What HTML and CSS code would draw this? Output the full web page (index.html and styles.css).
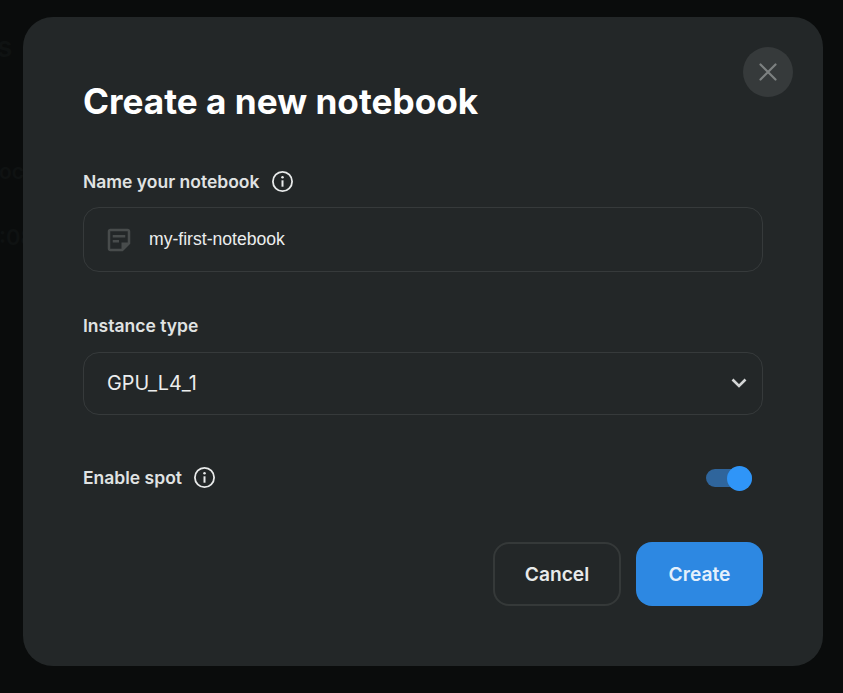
FILE: index.html
```html
<!DOCTYPE html>
<html lang="en">
<head>
<meta charset="utf-8">
<title>Create a new notebook</title>
<link rel="stylesheet" href="styles.css">
</head>
<body>
<div class="backdrop-text">
  <span class="bg-s">s</span>
  <span class="bg-a">oc-</span>
  <span class="bg-b">:08</span>
</div>
<main class="modal">
  <button class="close" type="button" aria-label="Close">
    <svg width="18" height="18" viewBox="0 0 18 18" fill="none" stroke="#7d8181" stroke-width="2.2" stroke-linecap="round"><path d="M1.5 1.5 16.5 16.5M16.5 1.5 1.5 16.5"/></svg>
  </button>
  <h1 class="title">Create a new notebook</h1>
  <div class="field name-field">
    <div class="label-row">
      <span class="label">Name your notebook</span>
      <svg class="info" width="23" height="23" viewBox="0 0 23 23" fill="none"><circle cx="11.5" cy="11.5" r="9.6" stroke="#e8eaea" stroke-width="1.8"/><circle cx="11.5" cy="7.3" r="1.25" fill="#e8eaea"/><path d="M11.5 10.3v6.4" stroke="#e8eaea" stroke-width="2"/></svg>
    </div>
    <div class="box input-box">
      <svg width="30" height="30" viewBox="0 0 24 24" fill="#484c4c"><path d="M19 5v9h-5v5H5V5h14m0-2H4.99C3.89 3 3 3.9 3 5v14c0 1.1.89 2 1.99 2H15l6-6V5c0-1.1-.9-2-2-2zm-7 11H7v-2h5v2zm5-4H7V8h10v2z"/></svg>
      <span class="input-text">my-first-notebook</span>
    </div>
  </div>
  <div class="field type-field">
    <div class="label-row"><span class="label">Instance type</span></div>
    <div class="box select-box">
      <span class="select-text">GPU_L4_1</span>
      <svg width="16" height="10" viewBox="0 0 16 10" fill="none"><path d="M1.5 1.5 8 8l6.5-6.5" stroke="#d4d6d6" stroke-width="2.6"/></svg>
    </div>
  </div>
  <div class="spot-row">
    <div class="label-row">
      <span class="label">Enable spot</span>
      <svg class="info" width="23" height="23" viewBox="0 0 23 23" fill="none"><circle cx="11.5" cy="11.5" r="9.6" stroke="#e8eaea" stroke-width="1.8"/><circle cx="11.5" cy="7.3" r="1.25" fill="#e8eaea"/><path d="M11.5 10.3v6.4" stroke="#e8eaea" stroke-width="2"/></svg>
    </div>
    <div class="toggle"><span class="knob"></span></div>
  </div>
  <div class="actions">
    <button class="btn cancel" type="button">Cancel</button>
    <button class="btn create" type="button">Create</button>
  </div>
</main>
</body>
</html>
```
FILE: styles.css
```css
* { box-sizing: border-box; }
html, body { margin: 0; height: 100%; }
body {
  background: #0a0c0c;
  font-family: Inter, "Liberation Sans", sans-serif;
  overflow: hidden;
  padding: 17px 0 0 23px;
}
.backdrop-text span {
  position: absolute;
  color: #0f1212;
  font-weight: 600;
  line-height: 1;
}
.bg-s { left: -3px; top: 33px; font-size: 28px; }
.bg-a { left: -1px; top: 161px; font-size: 21px; }
.bg-b { left: -1px; top: 226px; font-size: 22px; }
.modal {
  position: relative;
  width: 800px;
  height: 649px;
  background: #232728;
  border-radius: 30px;
  padding: 59px 60px 60px;
  display: flex;
  flex-direction: column;
}
.close {
  position: absolute;
  top: 30px;
  right: 30px;
  width: 50px;
  height: 50px;
  border: 0;
  border-radius: 50%;
  background: #363a3b;
  display: flex;
  align-items: center;
  justify-content: center;
  padding: 0;
}
.title {
  margin: 0;
  font-size: 35.2px;
  line-height: 50px;
  font-weight: 700;
  color: #fff;
}
.label-row {
  display: flex;
  align-items: center;
  gap: 11.5px;
  height: 24px;
}
.label {
  font-size: 17.5px;
  font-weight: 600;
  color: #e0e3e3;
}
.name-field { margin-top: 43px; }
.type-field { margin-top: 41px; }
.box {
  margin-top: 14px;
  border: 1px solid #363a3b;
  border-radius: 16px;
  display: flex;
  align-items: center;
}
.input-box { height: 65px; padding: 0 20px; gap: 15px; }
.input-text {
  font-family: "Liberation Sans", Arial, sans-serif;
  font-size: 17.6px;
  color: #eceeee;
}
.type-field .box { margin-top: 15px; }
.select-box {
  height: 63px;
  padding: 0 15px 2px 23px;
  justify-content: space-between;
}
.select-text { font-size: 19.8px; color: #eceeee; }
.spot-row {
  margin-top: 50px;
  display: flex;
  align-items: center;
  justify-content: space-between;
  padding-right: 11px;
}
.toggle {
  position: relative;
  top: 1px;
  width: 46px;
  height: 18px;
  border-radius: 9px;
  background: #2f659c;
}
.knob {
  position: absolute;
  right: 0;
  top: -3.5px;
  width: 25px;
  height: 25px;
  border-radius: 50%;
  background: #2f95f8;
}
.actions {
  margin-top: auto;
  display: flex;
  justify-content: flex-end;
  gap: 15px;
}
.btn {
  height: 64px;
  border-radius: 16px;
  font-family: inherit;
  font-size: 19.2px;
  font-weight: 600;
}
.cancel {
  width: 128px;
  background: transparent;
  border: 2px solid #353939;
  color: #e8eaea;
}
.create {
  width: 127px;
  background: #2d88e2;
  border: 0;
  color: #e4f0fc;
}
```
